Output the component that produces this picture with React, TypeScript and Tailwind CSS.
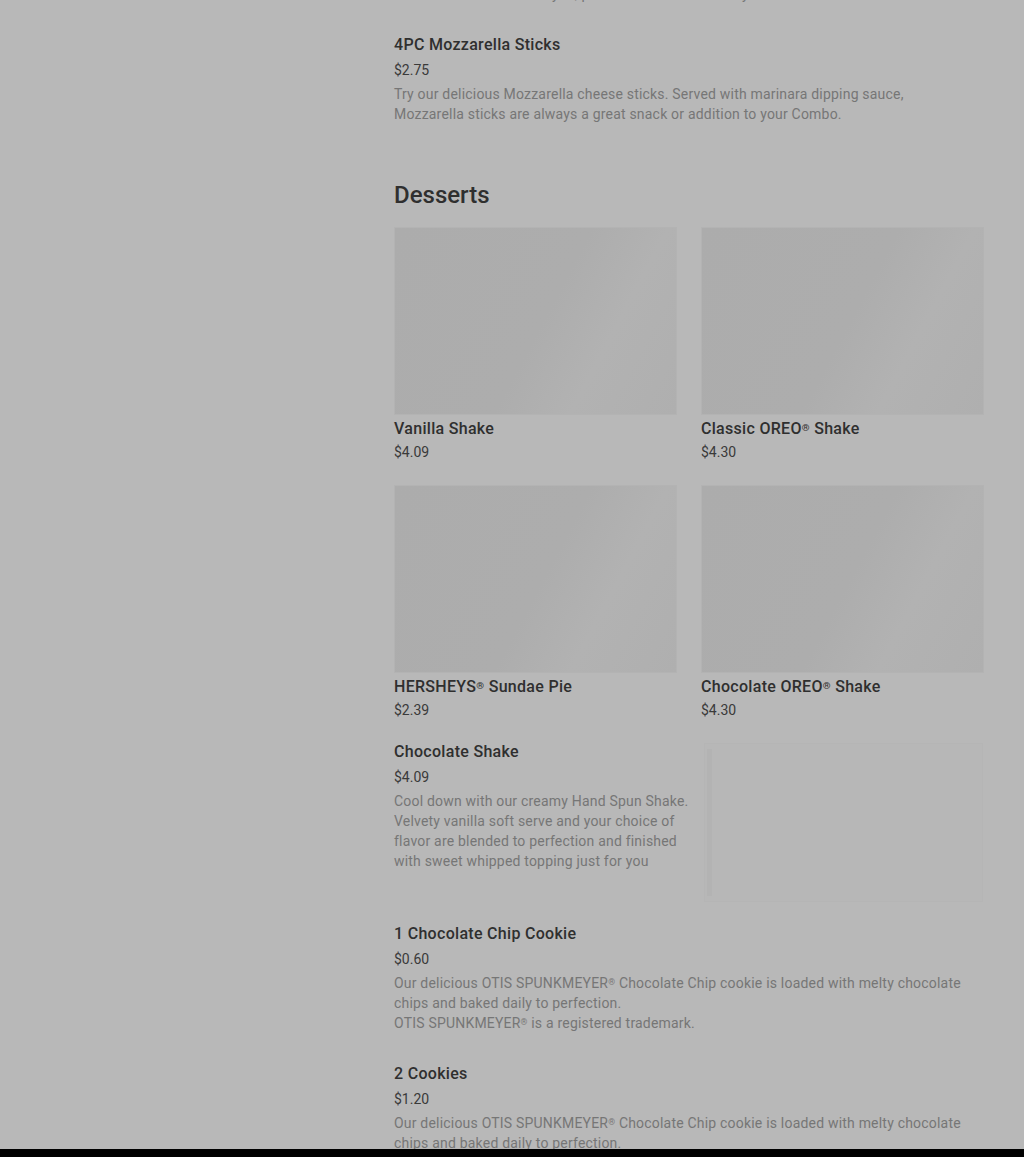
import React from "react";

type Dessert = { name: string; price: string };

const gridItems: Dessert[] = [
    { name: "Vanilla Shake", price: "$4.09" },
    { name: "Classic OREO® Shake", price: "$4.30" },
    { name: "HERSHEYS® Sundae Pie", price: "$2.39" },
    { name: "Chocolate OREO® Shake", price: "$4.30" },
];

// shrink the ® marks the way the menu renders them
const withMarks = (text: string) =>
    text.split("®").map((part, i, arr) => (
        <React.Fragment key={i}>
            {part}
            {i < arr.length - 1 && <span className="relative -top-[0.35em] text-[0.62em] leading-[0]">®</span>}
        </React.Fragment>
    ));

const ItemText = ({ name, price, lines }: { name: string; price: string; lines: string[] }) => (
    <div>
        <h3 className="text-base leading-6 font-medium tracking-[0.3px] text-[#2f2f2f]">{name}</h3>
        <p className="mt-[3px] text-sm leading-5 text-[#3a3a3a]">{price}</p>
        <div className="mt-1 text-sm leading-5 tracking-[0.2px] text-[#767676]">
            {lines.map((line, i) => (
                <p key={i} className="whitespace-nowrap">{withMarks(line)}</p>
            ))}
        </div>
    </div>
);

const Placeholder = () => (
    <div className="h-[188px] w-full border border-[#b3b3b3] bg-[linear-gradient(118deg,#acacac_0%,#adadad_52%,#b2b2b2_72%,#afafaf_100%)]"></div>
);

const App = () => {
    return (
        <div className="h-[1157px] overflow-hidden flex flex-col bg-[#b8b8b8] font-['Roboto',sans-serif]">
            <div className="flex-1 overflow-hidden pl-[394px] pr-[40px]">
                <div className="-mt-[16px]">
                    <p className="text-sm leading-5 tracking-[0.2px] text-[#767676] whitespace-nowrap">
                        Served hot and fresh for you, paired with the sauce they love.
                    </p>

                    <div className="mt-[29px]">
                        <ItemText
                            name="4PC Mozzarella Sticks"
                            price="$2.75"
                            lines={[
                                "Try our delicious Mozzarella cheese sticks. Served with marinara dipping sauce,",
                                "Mozzarella sticks are always a great snack or addition to your Combo.",
                            ]}
                        />
                    </div>

                    <h2 className="mt-[55px] text-2xl leading-8 font-medium text-[#2f2f2f]">Desserts</h2>

                    <div className="mt-4 grid grid-cols-2 gap-x-6 gap-y-[23px]">
                        {gridItems.map(item => (
                            <div key={item.name}>
                                <Placeholder />
                                <h3 className="mt-[2px] text-base leading-6 font-medium tracking-[0.3px] text-[#2f2f2f]">
                                    {withMarks(item.name)}
                                </h3>
                                <p className="mt-px text-sm leading-5 text-[#3a3a3a]">{item.price}</p>
                            </div>
                        ))}
                    </div>

                    <div className="mt-[20px] flex justify-between">
                        <ItemText
                            name="Chocolate Shake"
                            price="$4.09"
                            lines={[
                                "Cool down with our creamy Hand Spun Shake.",
                                "Velvety vanilla soft serve and your choice of",
                                "flavor are blended to perfection and finished",
                                "with sweet whipped topping just for you",
                            ]}
                        />
                        <div className="mt-[3px] mr-px w-[279px] h-[159px] border border-[#b5b5b5] bg-[#b7b7b7] flex items-stretch py-[5px]">
                            <div className="w-[5px] ml-[2px] bg-[#b3b3b3]"></div>
                        </div>
                    </div>

                    <div className="mt-[20px]">
                        <ItemText
                            name="1 Chocolate Chip Cookie"
                            price="$0.60"
                            lines={[
                                "Our delicious OTIS SPUNKMEYER® Chocolate Chip cookie is loaded with melty chocolate",
                                "chips and baked daily to perfection.",
                                "OTIS SPUNKMEYER® is a registered trademark.",
                            ]}
                        />
                    </div>

                    <div className="mt-[29px]">
                        <ItemText
                            name="2 Cookies"
                            price="$1.20"
                            lines={[
                                "Our delicious OTIS SPUNKMEYER® Chocolate Chip cookie is loaded with melty chocolate",
                                "chips and baked daily to perfection.",
                            ]}
                        />
                    </div>
                </div>
            </div>
            <div className="h-2 shrink-0 bg-black"></div>
        </div>
    );
};

export default App;
